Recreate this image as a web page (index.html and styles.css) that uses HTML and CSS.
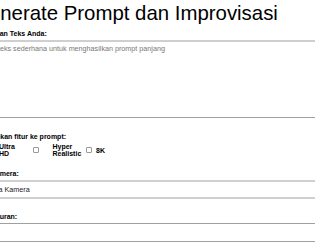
FILE: index.html
```html
<!DOCTYPE html>
<html lang="id">
<head>
    <meta charset="UTF-8">
    <meta name="viewport" content="width=device-width, initial-scale=1.0">
    <title>Generate Prompt dan Improvisasi</title>
    <link rel="stylesheet" href="styles.css">
</head>
<body>
    <div class="container">
        <h1>Generate Prompt dan Improvisasi</h1>

        <label class="field-label" for="inputText">Masukkan Teks Anda:</label>
        <textarea id="inputText" class="text-area" placeholder="Tulis teks sederhana untuk menghasilkan prompt panjang"></textarea>

        <p class="field-label">Tambahkan fitur ke prompt:</p>
        <div class="feature-list">
            <label class="feature"><input type="checkbox"><span>Ultra HD</span></label>
            <label class="feature"><input type="checkbox"><span>Hyper Realistic</span></label>
            <label class="feature feature-short"><input type="checkbox"><span>8K</span></label>
        </div>

        <label class="field-label" for="camera">Pilih Kamera:</label>
        <input type="text" id="camera" class="text-input camera-input" value="Tanpa Kamera">

        <label class="field-label" for="size">Pilih Ukuran:</label>
        <input type="text" id="size" class="text-input">
    </div>
</body>
</html>
```

FILE: styles.css
```css
* {
    margin: 0;
    padding: 0;
    box-sizing: border-box;
}

body {
    font-family: "Liberation Sans", Arial, sans-serif;
    background-color: #fff;
    color: #000;
    overflow: hidden;
}

.container {
    width: 400px;
    margin-left: -26px;
}

h1 {
    font-size: 20.4px;
    font-weight: normal;
    line-height: 24px;
    padding-top: 1px;
    margin: 0 0 4px -1px;
}

.field-label {
    display: block;
    font-size: 7px;
    font-weight: bold;
    line-height: 9px;
    margin-bottom: 2px;
}

.text-area {
    display: block;
    width: 100%;
    height: 78px;
    padding: 2px 7px;
    font-family: inherit;
    font-size: 7.2px;
    color: #222;
    border: none;
    border-top: 2px solid #cfcfcf;
    border-bottom: 1px solid #a0a0a0;
    resize: none;
    outline: none;
    margin-bottom: 14px;
}

.text-area::placeholder {
    color: #777;
}

.feature-list {
    display: flex;
    align-items: center;
    gap: 6px;
    padding-left: 5px;
    margin: 1px 0 12px;
}

.feature {
    display: flex;
    align-items: center;
    gap: 14px;
    font-size: 7px;
    font-weight: bold;
    line-height: 7px;
}

.feature-short {
    gap: 4px;
}

.feature input {
    appearance: none;
    width: 6px;
    height: 6px;
    border: 1px solid #999;
    border-radius: 1px;
    background-color: #fff;
}

.feature span {
    width: 27.5px;
}

.feature-short span {
    width: auto;
}

.text-input {
    display: block;
    width: 100%;
    height: 19px;
    padding: 0 9px;
    font-family: inherit;
    font-size: 7.2px;
    color: #222;
    border: none;
    border-top: 1px solid #a0a0a0;
    border-bottom: 1px solid #a0a0a0;
    outline: none;
    margin-bottom: 13px;
}

.camera-input {
    border-top: 2px solid #d0d0d0;
    border-bottom: 2px solid #d0d0d0;
}
```
